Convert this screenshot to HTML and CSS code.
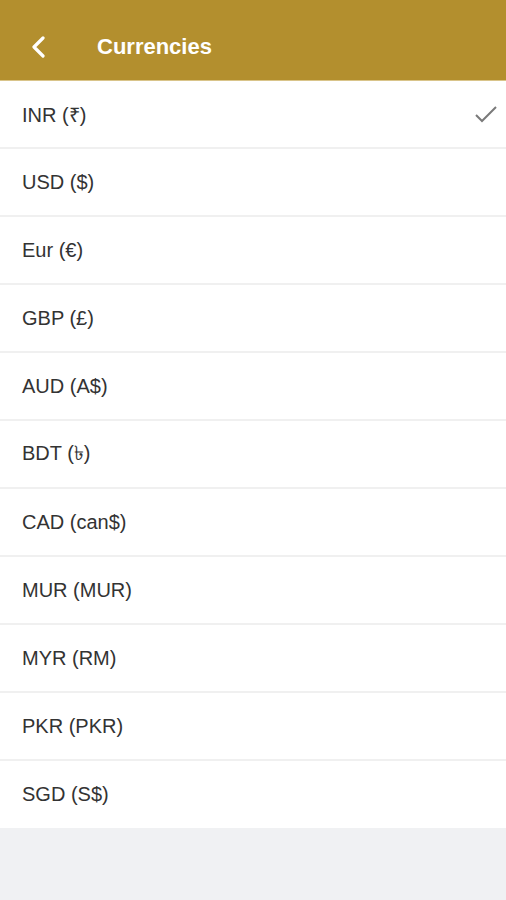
FILE: index.html
```html
<!DOCTYPE html>
<html lang="en">
<head>
  <meta charset="UTF-8">
  <title>Currencies</title>
  <link rel="stylesheet" href="styles.css">
</head>
<body>

  <header class="topbar">
    <a href="#" class="back">
      <svg width="18" height="22" viewBox="0 0 18 22"><path d="M14 2 L5 11 L14 20" fill="none" stroke="#fff" stroke-width="3.2" stroke-linecap="round" stroke-linejoin="round"/></svg>
    </a>
    <h1>Currencies</h1>
  </header>

  <ul class="lista">
    <li class="activo">INR (₹)
      <svg class="check" width="24" height="18" viewBox="0 0 24 18"><path d="M2 10 L8 16 L22 2" fill="none" stroke="#7a7a7a" stroke-width="2"/></svg>
    </li>
    <li>USD ($)</li>
    <li>Eur (€)</li>
    <li>GBP (£)</li>
    <li>AUD (A$)</li>
    <li>BDT (৳)</li>
    <li>CAD (can$)</li>
    <li>MUR (MUR)</li>
    <li>MYR (RM)</li>
    <li>PKR (PKR)</li>
    <li>SGD (S$)</li>
  </ul>

</body>
</html>
```

FILE: styles.css
```css
body {
  margin: 0;
  font-family: "Liberation Sans", Arial, sans-serif;
  background: #f0f1f3;
}

.topbar {
  background: #b38f2e;
  height: 81px;
  display: flex;
  align-items: center;
  padding: 14px 0 0 29px;
  border-bottom: 1px solid #d9c48a;
  box-sizing: border-box;
}

.back {
  display: flex;
  width: 18px;
  margin-right: 50px;
}

.topbar h1 {
  margin: 0;
  color: white;
  font-size: 22px;
  font-weight: bold;
}

.lista {
  list-style: none;
  margin: 0;
  padding: 0;
  background: white;
}

.lista li {
  height: 66px;
  display: flex;
  align-items: center;
  justify-content: space-between;
  padding: 0 8px 0 22px;
  font-size: 20px;
  color: #333;
  border-bottom: 2px solid #f0f0f0;
}

.lista li:last-child {
  border-bottom: none;
  height: 67px;
}
```
